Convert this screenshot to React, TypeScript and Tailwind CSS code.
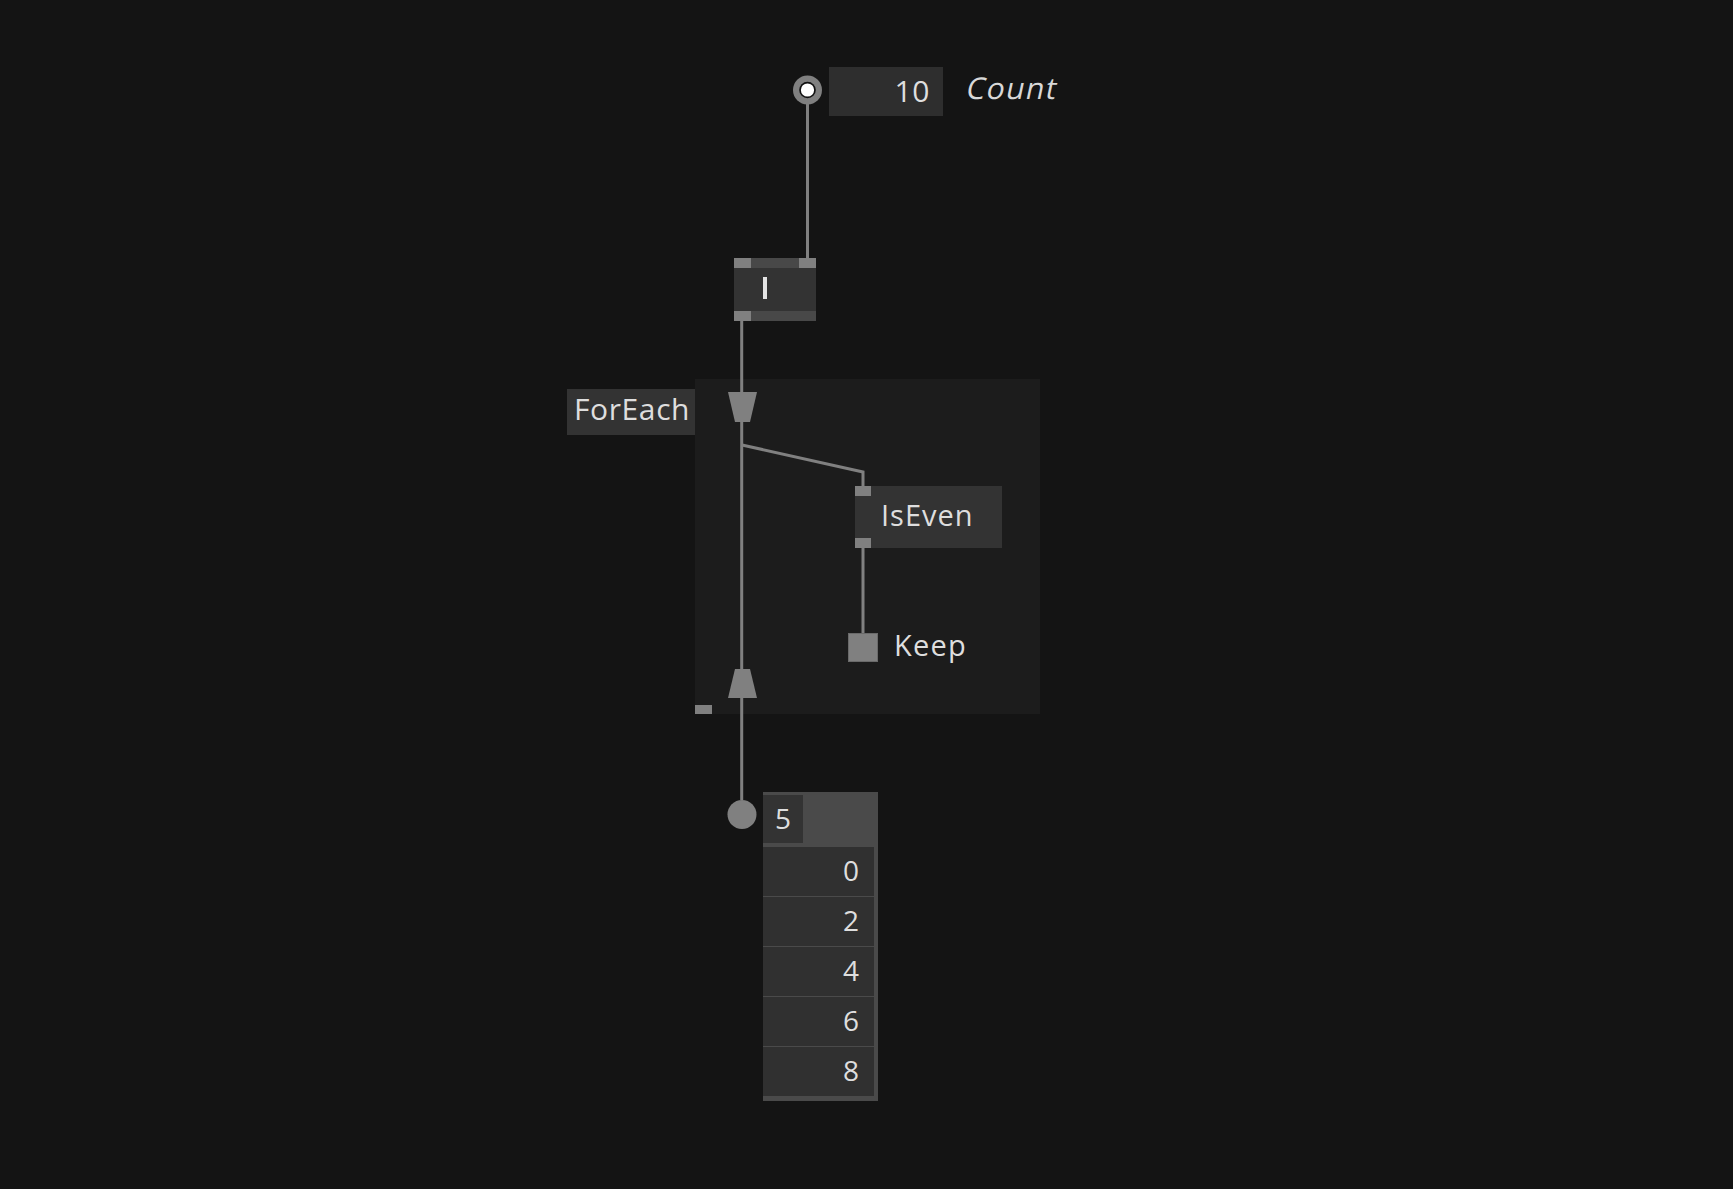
// Node patch: Count -> I -> ForEach(IsEven / Keep) -> spread output

const WIRE = '#808080'

function Pin({ className }: { className: string }) {
  return <div className={`absolute bg-[#808080] ${className}`} />
}

export default function App() {
  const values = [0, 2, 4, 6, 8]

  return (
    <div className="relative w-[1733px] h-[1189px] overflow-hidden bg-[#141414] font-['Open_Sans',sans-serif] text-[#dedede]">
      {/* ForEach region */}
      <div className="absolute left-[695px] top-[379px] w-[345px] h-[335px] bg-[#1c1c1c]" />
      <div className="absolute left-[567px] top-[389px] w-[128px] h-[46px] bg-[#333333] flex items-center pl-[7px] pb-[6px] text-[30px] leading-none tracking-[0.6px]">
        ForEach
      </div>

      {/* Wires and splicers */}
      <svg className="absolute left-0 top-0" width={1733} height={1189}>
        <line x1={807.5} y1={100} x2={807.5} y2={258} stroke={WIRE} strokeWidth={3} />
        <line x1={741.7} y1={321} x2={741.7} y2={800} stroke={WIRE} strokeWidth={3} />
        <polyline points="742,445 863,472 863,487" fill="none" stroke={WIRE} strokeWidth={3} />
        <line x1={863} y1={548} x2={863} y2={634} stroke={WIRE} strokeWidth={3} />
        <polygon points="728,392 757,392 750,422 735,422" fill={WIRE} />
        <polygon points="735,669 750,669 757,698 728,698" fill={WIRE} />
        <rect x={695} y={705} width={17} height={9} fill={WIRE} />
        {/* Count pad pin */}
        <circle cx={807.5} cy={90} r={14.5} fill={WIRE} />
        <circle cx={807.5} cy={90} r={8.3} fill="#111" />
        <circle cx={807.5} cy={90} r={6.6} fill="#ffffff" />
        {/* output pad */}
        <circle cx={742} cy={814.5} r={14.5} fill={WIRE} />
      </svg>

      {/* Count IO box */}
      <div className="absolute left-[829px] top-[67px] w-[114px] h-[49px] bg-[#2e2e2e] flex items-center justify-end pr-[13px] pb-[1px] text-[30px] leading-none tracking-[0.6px]">
        10
      </div>
      <div className="absolute left-[967px] top-[73px] text-[30px] leading-none text-[#d8d8d8] tracking-[1.4px] skew-x-[-12deg]">
        Count
      </div>

      {/* I node */}
      <div className="absolute left-[734px] top-[258px] w-[82px] h-[63px] flex flex-col bg-[#333333]">
        <div className="relative h-[10px] bg-[#484848]">
          <Pin className="left-0 top-0 w-[17px] h-[10px]" />
          <Pin className="right-0 top-0 w-[17px] h-[10px]" />
        </div>
        <div className="flex-1 flex items-center pl-[29px] pb-[4px]">
          <div className="w-[4px] h-[22px] bg-[#e4e4e4]" />
        </div>
        <div className="relative h-[10px] bg-[#484848]">
          <Pin className="left-0 top-0 w-[17px] h-[10px]" />
        </div>
      </div>

      {/* IsEven node */}
      <div className="absolute left-[855px] top-[486px] w-[147px] h-[62px] bg-[#333333] flex items-center pl-[26px] pb-[5px] text-[29px] leading-none tracking-[1px]">
        IsEven
        <Pin className="left-0 top-0 w-[16px] h-[10px]" />
        <Pin className="left-0 bottom-0 w-[16px] h-[10px]" />
      </div>

      {/* Keep pad */}
      <div className="absolute left-[848px] top-[633px] w-[30px] h-[29px] bg-[#808080] border border-[#6a6a6a]" />
      <div className="absolute left-[894px] top-[630px] text-[29px] leading-none tracking-[1.2px]">Keep</div>

      {/* Spread output */}
      <div className="absolute left-[763px] top-[792px] w-[115px] flex flex-col gap-px bg-[#4a4a4a] pb-[5px]">
        <div className="h-[54px] pt-[3px] pb-[3px]">
          <div className="w-[40px] h-[48px] bg-[#333333] flex items-center justify-center pb-[3px] text-[28px] leading-none">
            5
          </div>
        </div>
        {values.map(v => (
          <div
            key={v}
            className="w-[111px] h-[49px] bg-[#303030] flex items-center justify-end pr-[15px] pb-[4px] text-[28px] leading-none"
          >
            {v}
          </div>
        ))}
      </div>
    </div>
  )
}
